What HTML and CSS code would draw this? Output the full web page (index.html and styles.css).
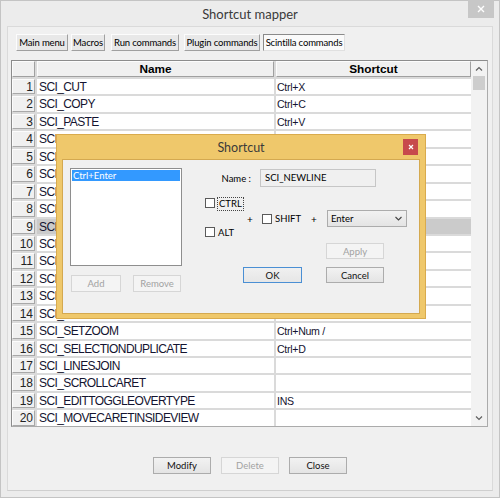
FILE: index.html
```html
<!DOCTYPE html>
<html lang="en">
<head>
    <meta charset="UTF-8">
    <title>Shortcut mapper</title>
    <link rel="stylesheet" href="styles.css">
</head>
<body>
    <div class="window">
        <div class="titlebar">
            <span class="title">Shortcut mapper</span>
            <span class="win-close">
                <svg width="8" height="8" viewBox="0 0 8 8"><path d="M1 1L7 7M7 1L1 7" stroke="#fff" stroke-width="1.4"/></svg>
            </span>
        </div>

        <div class="client">
            <div class="tabs">
                <span class="tab tab-main">Main menu</span>
                <span class="tab tab-macros">Macros</span>
                <span class="tab tab-run">Run commands</span>
                <span class="tab tab-plugin">Plugin commands</span>
                <span class="tab tab-sci active">Scintilla commands</span>
            </div>

            <div class="grid">
                <div class="cells">
                    <div class="hd"></div><div class="hd">Name</div><div class="hd">Shortcut</div>
                    <div class="rn">1</div><div class="nm">SCI_CUT</div><div class="sc">Ctrl+X</div>
                    <div class="rn">2</div><div class="nm">SCI_COPY</div><div class="sc">Ctrl+C</div>
                    <div class="rn">3</div><div class="nm">SCI_PASTE</div><div class="sc">Ctrl+V</div>
                    <div class="rn">4</div><div class="nm">SCI_CLEAR</div><div class="sc">Del</div>
                    <div class="rn">5</div><div class="nm">SCI_SELECTALL</div><div class="sc">Ctrl+A</div>
                    <div class="rn">6</div><div class="nm">SCI_CLEARALL</div><div class="sc"></div>
                    <div class="rn">7</div><div class="nm">SCI_UNDO</div><div class="sc">Ctrl+Z</div>
                    <div class="rn">8</div><div class="nm">SCI_REDO</div><div class="sc">Ctrl+Y</div>
                    <div class="rn">9</div><div class="nm sel">SCI_NEWLINE</div><div class="sc sel">Enter</div>
                    <div class="rn">10</div><div class="nm">SCI_TAB</div><div class="sc">Tab</div>
                    <div class="rn">11</div><div class="nm">SCI_BACKTAB</div><div class="sc">Shift+Tab</div>
                    <div class="rn">12</div><div class="nm">SCI_FORMFEED</div><div class="sc"></div>
                    <div class="rn">13</div><div class="nm">SCI_ZOOMIN</div><div class="sc">Ctrl+Num +</div>
                    <div class="rn">14</div><div class="nm">SCI_ZOOMOUT</div><div class="sc">Ctrl+Num -</div>
                    <div class="rn">15</div><div class="nm">SCI_SETZOOM</div><div class="sc">Ctrl+Num /</div>
                    <div class="rn">16</div><div class="nm">SCI_SELECTIONDUPLICATE</div><div class="sc">Ctrl+D</div>
                    <div class="rn">17</div><div class="nm">SCI_LINESJOIN</div><div class="sc"></div>
                    <div class="rn">18</div><div class="nm">SCI_SCROLLCARET</div><div class="sc"></div>
                    <div class="rn">19</div><div class="nm">SCI_EDITTOGGLEOVERTYPE</div><div class="sc">INS</div>
                    <div class="rn">20</div><div class="nm">SCI_MOVECARETINSIDEVIEW</div><div class="sc"></div>
                </div>
                <div class="scrollbar">
                    <div class="arrow">
                        <svg width="8" height="5" viewBox="0 0 8 5"><path d="M1 4.5L4 1.5L7 4.5" fill="none" stroke="#606060" stroke-width="1.2"/></svg>
                    </div>
                    <div class="thumb"></div>
                    <div class="track"></div>
                    <div class="arrow">
                        <svg width="8" height="5" viewBox="0 0 8 5"><path d="M1 0.5L4 3.5L7 0.5" fill="none" stroke="#606060" stroke-width="1.2"/></svg>
                    </div>
                </div>
            </div>

            <div class="actions">
                <span class="btn btn-wide">Modify</span>
                <span class="btn btn-wide off">Delete</span>
                <span class="btn btn-wide">Close</span>
            </div>
        </div>

        <!-- modal editor on top of the list -->
        <div class="dialog">
            <div class="dlg-title">
                <span>Shortcut</span>
                <span class="dlg-close">
                    <svg width="6" height="6" viewBox="0 0 6 6"><path d="M1 1L5 5M5 1L1 5" stroke="#fff" stroke-width="1.2"/></svg>
                </span>
            </div>
            <div class="dlg-body">
                <div class="dlg-left">
                    <div class="listbox">
                        <div class="list-item">Ctrl+Enter</div>
                    </div>
                    <div class="left-buttons">
                        <span class="btn off btn-add">Add</span>
                        <span class="btn off btn-remove">Remove</span>
                    </div>
                </div>
                <div class="dlg-right">
                    <div class="name-row">
                        <span class="name-label">Name :</span>
                        <span class="name-input">SCI_NEWLINE</span>
                    </div>
                    <div class="mods">
                        <label class="chk chk-ctrl"><span class="box"></span><span class="focus">CTRL</span></label>
                        <span class="plus plus-1">+</span>
                        <label class="chk chk-shift"><span class="box"></span><span>SHIFT</span></label>
                        <span class="plus plus-2">+</span>
                        <span class="combo">Enter
                            <svg width="7" height="5" viewBox="0 0 7 5"><path d="M0.5 1L3.5 4L6.5 1" fill="none" stroke="#444" stroke-width="1.1"/></svg>
                        </span>
                        <label class="chk chk-alt"><span class="box"></span><span>ALT</span></label>
                    </div>
                    <div class="apply-row">
                        <span class="btn off btn-dlg">Apply</span>
                    </div>
                    <div class="ok-row">
                        <span class="btn def btn-ok">OK</span>
                        <span class="btn btn-dlg">Cancel</span>
                    </div>
                </div>
            </div>
        </div>
    </div>
</body>
</html>
```

FILE: styles.css
```css
* {
    box-sizing: border-box;
}
body {
    margin: 0;
    background: #ffffff;
    font-family: Lato, "Noto Sans", sans-serif;
    color: #000;
}
.window {
    position: relative;
    width: 500px;
    height: 498px;
    background: #ececec;
    border: 1px solid #c4c4c4;
}
.titlebar {
    height: 25px;
    display: flex;
    align-items: center;
    justify-content: center;
}
.title {
    font-size: 13px;
    color: #3a3a3a;
    margin-top: 1px;
}
.win-close {
    position: absolute;
    top: -1px;
    right: 5px;
    width: 26px;
    height: 18px;
    background: #c7c7c7;
    display: flex;
    align-items: center;
    justify-content: center;
}
.client {
    margin: 0 6px;
    height: 465px;
    background: #f0f0f0;
    border: 1px solid #dadada;
    border-bottom-color: #cfcfcf;
    padding: 7px 0 0 3px;
}

/* tabs */
.tabs {
    display: flex;
    margin-left: 5px;
    height: 17px;
}
.tab {
    height: 17px;
    font-size: 9.5px;
    letter-spacing: -0.15px;
    white-space: nowrap;
    display: flex;
    align-items: center;
    justify-content: center;
    background: #e8e8e8;
    border: 1px solid;
    border-color: #fcfcfc #a0a0a0 #a0a0a0 #fcfcfc;
}
.tab-main { width: 52px; margin-right: 3px; }
.tab-macros { width: 34px; margin-right: 6px; }
.tab-run { width: 68px; margin-right: 5px; }
.tab-plugin { width: 76px; margin-right: 3px; }
.tab-sci { width: 82px; }
.tab.active {
    background: #fafafa;
    border-color: #8a8a8a #e0e0e0 #e0e0e0 #8a8a8a;
}

/* list grid */
.grid {
    margin-top: 9px;
    width: 477px;
    display: flex;
    border: 1px solid #ababab;
    border-top-color: #8c8c8c;
    border-left-color: #8c8c8c;
    background: #dadada;
}
.cells {
    flex: 1;
    display: grid;
    grid-template-columns: 23px 237px 195px;
    grid-template-rows: 16px;
    grid-auto-rows: 15.45px;
    gap: 2px;
    font-family: "Liberation Sans", Arial, sans-serif;
}
.hd {
    background: #f0f0f0;
    border: 1px solid;
    border-color: #fcfcfc #a0a0a0 #a0a0a0 #fcfcfc;
    font-weight: bold;
    font-size: 11.8px;
    text-align: center;
    line-height: 14px;
}
.rn {
    background: #f0f0f0;
    border: 1px solid;
    border-color: #fcfcfc #a8a8a8 #a8a8a8 #fcfcfc;
    text-align: right;
    padding-right: 1px;
    font-size: 12px;
    line-height: 15px;
    color: #222;
    overflow: hidden;
}
.nm {
    background: #fff;
    font-size: 12px;
    letter-spacing: -0.6px;
    line-height: 15px;
    padding: 1px 0 0 2px;
    color: #141430;
    white-space: nowrap;
    overflow: hidden;
}
.sc {
    background: #fff;
    font-size: 10.6px;
    letter-spacing: -0.3px;
    line-height: 15px;
    padding: 1px 0 0 1px;
    color: #141430;
    overflow: hidden;
}
.sel {
    background: #cbcbcb;
}
.scrollbar {
    width: 16px;
    background: #f2f2f2;
    display: flex;
    flex-direction: column;
    align-items: center;
}
.arrow {
    width: 16px;
    height: 15px;
    display: flex;
    align-items: center;
    justify-content: center;
}
.thumb {
    width: 12px;
    height: 14px;
    background: #cdcdcd;
}
.track {
    flex: 1;
}

/* bottom buttons */
.actions {
    display: flex;
    justify-content: center;
    gap: 10px;
    margin-top: 30px;
    margin-left: -3px;
}
.btn {
    height: 17px;
    font-size: 9.5px;
    white-space: nowrap;
    display: flex;
    align-items: center;
    justify-content: center;
    border: 1px solid #acacac;
    background: linear-gradient(#f2f2f2, #e4e4e4);
    color: #111;
}
.btn.off {
    border-color: #d6d6d6;
    background: #f4f4f4;
    color: #a2a2a2;
}
.btn.def {
    border-color: #4a8fd4;
    background: linear-gradient(#f0f0f0, #e6e6e6);
}
.btn-wide { width: 58px; }

/* shortcut dialog */
.dialog {
    position: absolute;
    left: 55px;
    top: 133px;
    width: 370px;
    height: 185px;
    background: #efc86b;
    border: 1px solid #d9ab4d;
}
.dlg-title {
    height: 24px;
    display: flex;
    align-items: center;
    justify-content: center;
    font-size: 12.5px;
    color: #3a3a3a;
}
.dlg-close {
    position: absolute;
    top: 4px;
    right: 7px;
    width: 15px;
    height: 16px;
    background: #c74a4c;
    display: flex;
    align-items: center;
    justify-content: center;
}
.dlg-body {
    margin: 0 5px;
    height: 155px;
    background: #f0f0f0;
    border: 1px solid #d4a950;
    display: flex;
    padding: 8px 0 0 7px;
}
.dlg-left {
    width: 113px;
}
.listbox {
    width: 112px;
    height: 98px;
    background: #fff;
    border: 1px solid #8e8e8e;
    padding: 1px;
}
.list-item {
    height: 11px;
    background: #3399ff;
    color: #fff;
    font-size: 9.5px;
    line-height: 11px;
    padding-left: 1px;
}
.left-buttons {
    display: flex;
    margin-top: 9px;
}
.btn-add { width: 50px; margin-left: 1px; }
.btn-remove { width: 48px; margin-left: 12px; }

.dlg-right {
    margin-left: 22px;
    padding-top: 1px;
    font-size: 9.5px;
}
.name-row {
    display: flex;
    align-items: center;
    height: 18px;
}
.name-label {
    width: 46px;
    text-align: right;
}
.name-input {
    margin-left: 9px;
    width: 116px;
    height: 18px;
    border: 1px solid #c6c6c6;
    background: #f0f0f0;
    padding-left: 4px;
    line-height: 16px;
}
.mods {
    margin-top: 11px;
    display: grid;
    grid-template-columns: 39px 18px 47px 18px 80px;
    grid-template-rows: 12px 17px 12px;
}
.chk {
    display: flex;
    align-items: center;
}
.box {
    width: 10px;
    height: 10px;
    border: 1px solid #5a5a5a;
    background: #fff;
    margin-right: 3px;
}
.chk-ctrl {
    grid-column: 1;
    grid-row: 1;
    align-items: flex-start;
}
.focus {
    outline: 1px dotted #444;
    line-height: 12px;
    padding: 0 1px;
}
.chk-alt {
    grid-column: 1;
    grid-row: 3;
    align-items: flex-start;
}
.chk-shift {
    grid-column: 3;
    grid-row: 2;
}
.plus {
    grid-row: 2;
    display: flex;
    align-items: center;
    font-size: 10px;
}
.plus-1 { grid-column: 2; padding-left: 3px; }
.plus-2 { grid-column: 4; padding-left: 2px; }
.combo {
    grid-column: 5;
    grid-row: 2;
    border: 1px solid #acacac;
    background: linear-gradient(#f2f2f2, #e4e4e4);
    display: flex;
    align-items: center;
    justify-content: space-between;
    padding: 0 4px 0 3px;
}
.apply-row {
    margin-top: 4px;
    padding-left: 121px;
}
.btn-dlg {
    width: 58px;
    height: 16px;
}
.ok-row {
    margin-top: 8px;
    padding-left: 38px;
    display: flex;
    gap: 24px;
}
.btn-ok {
    width: 59px;
    height: 16px;
}
```
